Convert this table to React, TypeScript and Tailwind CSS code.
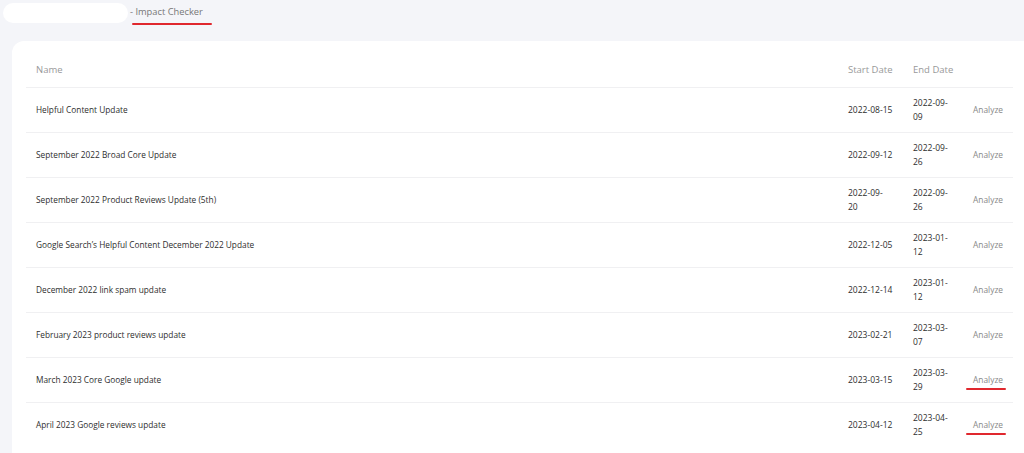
import React from "react";

type Update = {
    name: string;
    start: string[];
    end: string[];
    marked?: boolean;
};

const updates: Update[] = [
    { name: "Helpful Content Update", start: ["2022-08-15"], end: ["2022-09-", "09"] },
    { name: "September 2022 Broad Core Update", start: ["2022-09-12"], end: ["2022-09-", "26"] },
    { name: "September 2022 Product Reviews Update (5th)", start: ["2022-09-", "20"], end: ["2022-09-", "26"] },
    { name: "Google Search’s Helpful Content December 2022 Update", start: ["2022-12-05"], end: ["2023-01-", "12"] },
    { name: "December 2022 link spam update", start: ["2022-12-14"], end: ["2023-01-", "12"] },
    { name: "February 2023 product reviews update", start: ["2023-02-21"], end: ["2023-03-", "07"] },
    { name: "March 2023 Core Google update", start: ["2023-03-15"], end: ["2023-03-", "29"], marked: true },
    { name: "April 2023 Google reviews update", start: ["2023-04-12"], end: ["2023-04-", "25"], marked: true },
];

const cols = "grid grid-cols-[812px_65px_60px_50px]";

const DateCell = ({ lines }: { lines: string[] }) => (
    <div className="pl-[10px] text-[8.5px] leading-[14px] text-[#2e2e2e]">
        {lines.map((l, i) => (
            <div key={i} className="whitespace-nowrap">
                {l}
            </div>
        ))}
    </div>
);

const App = () => {
    return (
        <div
            className="h-[453px] w-[1024px] overflow-hidden bg-[#f4f5f9]"
            style={{ fontFamily: '"Open Sans", "Noto Sans", sans-serif' }}
        >
            {/* breadcrumb */}
            <div className="flex h-[24px] items-center pt-[2px]">
                <div className="ml-[3px] h-[20px] w-[125px] rounded-[10px] bg-white" />
                <div className="relative ml-[2px] pb-[2px] text-[9.3px] text-[#777]">
                    - Impact Checker
                    <span className="absolute left-[2px] top-[18px] h-[2px] w-[80px] rounded-full bg-[#e0282e]" />
                </div>
            </div>

            {/* card */}
            <div className="ml-[12px] mt-[17px] h-[420px] w-[1030px] rounded-tl-[12px] rounded-tr-[12px] bg-white pl-[14px] pt-[13px]">
                <div className="w-[987px]">
                    <div className={`${cols} h-[33px] items-center text-[9.5px] text-[#999]`}>
                        <div className="pl-[10px]">Name</div>
                        <div className="pl-[10px]">Start Date</div>
                        <div className="pl-[10px]">End Date</div>
                        <div />
                    </div>
                    {updates.map((u) => (
                        <div
                            key={u.name}
                            className={`${cols} h-[45px] items-center border-t border-[#f0f0f2]`}
                        >
                            <div className="pl-[10px] text-[8.3px] text-[#2e2e2e]">{u.name}</div>
                            <DateCell lines={u.start} />
                            <DateCell lines={u.end} />
                            <div className="relative pl-[10px] text-[8.4px] text-[#888]">
                                Analyze
                                {u.marked && (
                                    <span className="absolute left-[3px] top-[14px] h-[2px] w-[40px] rounded-full bg-[#e0282e]" />
                                )}
                            </div>
                        </div>
                    ))}
                </div>
            </div>
        </div>
    );
};

export default App;
